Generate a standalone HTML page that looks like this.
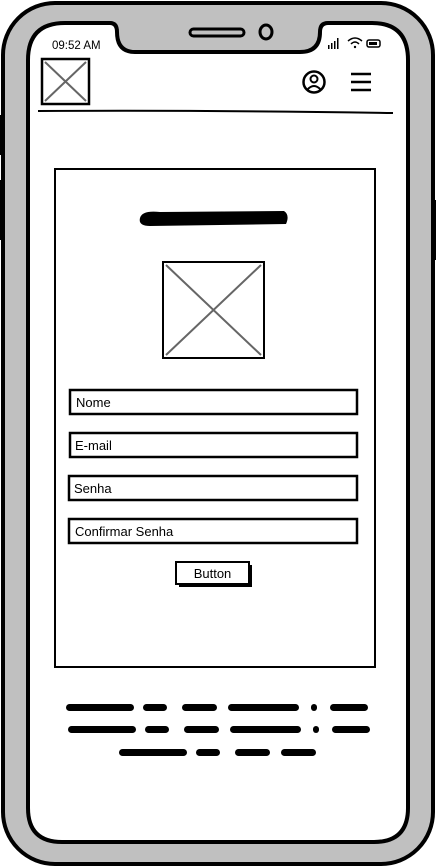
<!DOCTYPE html>
<html><head><style>
html,body{margin:0;padding:0;background:#fff;width:436px;height:867px;overflow:hidden}
svg{display:block}
text{font-family:"Liberation Sans",sans-serif;fill:#000}
</style></head><body>
<svg width="436" height="867" viewBox="0 0 436 867">
<rect x="3" y="3" width="430" height="861" rx="52" fill="#c0c0c0" stroke="#000" stroke-width="4"/>
<rect x="0" y="115" width="4" height="40" fill="#000"/>
<rect x="0" y="180" width="4" height="60" fill="#000"/>
<rect x="432" y="200" width="4" height="60" fill="#000"/>
<path d="M65 23 H110 Q117 23 117 32 Q117 52 135 52 H300 Q320 52 320 32 Q320 23 328 23 H372 Q408 23 408 60 V808 Q408 842 374 842 H62 Q28 842 28 808 V60 Q28 23 65 23 Z" fill="#fff" stroke="#000" stroke-width="4"/>
<rect x="190" y="29" width="54" height="7" rx="3.5" fill="none" stroke="#000" stroke-width="3"/>
<ellipse cx="266" cy="32" rx="6" ry="7" fill="none" stroke="#000" stroke-width="3"/>
<text x="52" y="49" font-size="11.5">09:52 AM</text>
<g fill="#000"><rect x="328" y="45" width="1.5" height="4"/><rect x="331" y="43" width="1.5" height="6"/><rect x="334" y="41" width="1.5" height="8"/><rect x="337" y="38" width="1.5" height="11"/></g>
<path d="M348 41 Q355 35 362 41 M351 44 Q355 40 359 44" fill="none" stroke="#000" stroke-width="1.5"/><circle cx="355" cy="47" r="1.2"/>
<rect x="367" y="40" width="13" height="7" rx="2" fill="none" stroke="#000" stroke-width="1.5"/><rect x="369" y="42" width="8" height="3" fill="#000"/>
<rect x="42" y="59" width="47" height="45" fill="#fff" stroke="#000" stroke-width="2.5"/>
<path d="M45 62 L86 101 M86 62 L45 101" stroke="#666" stroke-width="2"/>
<circle cx="314" cy="82" r="10.5" fill="none" stroke="#000" stroke-width="2.5"/>
<circle cx="314" cy="79" r="3.5" fill="none" stroke="#000" stroke-width="2"/>
<path d="M307 90 Q314 82 321 90" fill="none" stroke="#000" stroke-width="2"/>
<path d="M351 74 H371 M351 82 H371 M351 90 H371" stroke="#000" stroke-width="2.5"/>
<path d="M38 111 Q200 110 393 113" stroke="#000" stroke-width="2" fill="none"/>
<rect x="55" y="169" width="320" height="498" fill="#fff" stroke="#000" stroke-width="2"/>
<path d="M140 218 Q142 210 160 212 L284 211 Q290 215 286 224 L150 226 Q138 226 140 218 Z" fill="#000"/>
<rect x="163" y="262" width="101" height="96" fill="#fff" stroke="#000" stroke-width="2"/>
<path d="M166 265 L261 355 M261 265 L166 355" stroke="#666" stroke-width="2"/>
<g fill="#fff" stroke="#000" stroke-width="2.5">
<rect x="70" y="390" width="287" height="24"/>
<rect x="70" y="433" width="287" height="24"/>
<rect x="69" y="476" width="288" height="24"/>
<rect x="69" y="519" width="288" height="24"/>
</g>
<g font-size="13">
<text x="76" y="407">Nome</text>
<text x="75" y="450">E-mail</text>
<text x="74" y="493">Senha</text>
<text x="75" y="536">Confirmar Senha</text>
</g>
<rect x="179" y="565" width="73" height="22" fill="#000"/>
<rect x="176" y="562" width="73" height="22" fill="#fff" stroke="#000" stroke-width="2"/>
<text x="212.5" y="578" font-size="13" text-anchor="middle">Button</text>
<g fill="#000">
<rect x="66" y="704" width="68" height="7" rx="3.5"/><rect x="143" y="704" width="24" height="7" rx="3.5"/><rect x="182" y="704" width="35" height="7" rx="3.5"/><rect x="228" y="704" width="71" height="7" rx="3.5"/><rect x="311" y="704" width="6" height="7" rx="3"/><rect x="330" y="704" width="38" height="7" rx="3.5"/>
<rect x="68" y="726" width="68" height="7" rx="3.5"/><rect x="145" y="726" width="24" height="7" rx="3.5"/><rect x="184" y="726" width="35" height="7" rx="3.5"/><rect x="230" y="726" width="71" height="7" rx="3.5"/><rect x="313" y="726" width="6" height="7" rx="3"/><rect x="332" y="726" width="38" height="7" rx="3.5"/>
<rect x="119" y="749" width="68" height="7" rx="3.5"/><rect x="196" y="749" width="24" height="7" rx="3.5"/><rect x="235" y="749" width="35" height="7" rx="3.5"/><rect x="281" y="749" width="35" height="7" rx="3.5"/>
</g>
</svg>
</body></html>
